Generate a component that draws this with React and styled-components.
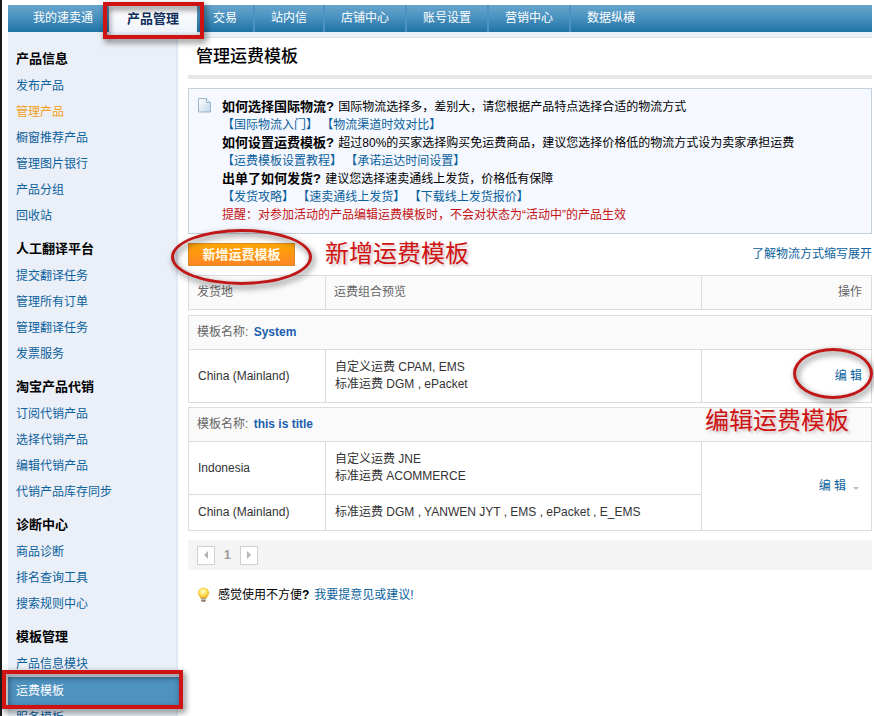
import React, { useState } from 'react';
import styled, { createGlobalStyle, css } from 'styled-components';

const GlobalStyle = createGlobalStyle`
  * {
    box-sizing: border-box;
  }
  body {
    margin: 0;
    background: white;
    color: #000;
    font-family: "Liberation Sans", "Noto Sans CJK SC", sans-serif;
    font-size: 12px;
    line-height: 18px;
  }
  a {
    color: #0b619c;
    text-decoration: none;
  }
`;

const Page = styled.div`
  height: 100vh;
  overflow: hidden;
  padding: 5px 2px 0 6px;
  border-left: 2px solid #1a1a1a;
`;

const Nav = styled.nav`
  display: flex;
  height: 27px;
  padding-left: 9px;
  background: linear-gradient(#68a5cc, #4a92c0 45%, #1f73a5);
`;

const NavItem = styled.div`
  position: relative;
  padding: 0 16px;
  line-height: 27px;
  border-right: ${(props) => (props.$line ? '2px solid #4b94c1' : 'none')};

  a {
    color: white;
  }

  ${(props) =>
    props.$active &&
    css`
      padding: 0 18px;
      background: linear-gradient(#ffffff, #f0f4fb);
      font-size: 13px;
      font-weight: bold;

      a {
        color: #12305c;
      }
    `}
`;

const Body = styled.div`
  display: flex;
`;

const Sidebar = styled.aside`
  flex: none;
  width: 170px;
  min-height: 100vh;
  padding-top: 14px;
  background: #ebf0f8;
  border-right: 2px solid #e1e8f6;
`;

const MenuTitle = styled.h2`
  margin: 0;
  padding-left: 8px;
  font-size: 13px;
  line-height: 26px;
`;

const MenuList = styled.ul`
  margin: 0 0 7px;
  padding: 1px 0 0;
  list-style: none;
`;

const MenuItem = styled.li`
  position: relative;
  padding-left: 8px;
  line-height: ${(props) => (props.$active ? '28px' : '26px')};
  background: ${(props) => (props.$active ? '#4e92c0' : 'none')};
  margin-right: ${(props) => (props.$active ? '-4px' : '0')};

  a {
    color: ${(props) => props.$color};
  }
`;

const Main = styled.main`
  flex: 1;
  min-width: 0;
  border-top: 5px solid #e9f1f9;
`;

const Content = styled.div`
  padding-left: 10px;
  border-top: 1px solid #d9e4ea;
`;

const Title = styled.h1`
  margin: 0 0 9px;
  padding-left: 8px;
  font-size: 17px;
  font-weight: 500;
  line-height: 37px;
  border-bottom: 4px solid #e6e6e6;
`;

const Notice = styled.section`
  display: flex;
  gap: 11px;
  padding: 9px;
  border: 1px solid #c3d1dd;
  background: #f5f8fe;
`;

const NoticeText = styled.div`
  p {
    margin: 0;
  }
  b {
    margin-right: 1px;
    font-size: 13px;
  }
`;

const Warning = styled.p`
  color: #c41414;
`;

const Toolbar = styled.div`
  display: flex;
  align-items: center;
  justify-content: space-between;
  height: 41px;
  padding-bottom: 1px;
`;

const Marked = styled.div`
  position: relative;
`;

const AddButton = styled.button`
  display: block;
  width: 107px;
  height: 23px;
  padding: 0;
  border: 1px solid #e08a24;
  background: linear-gradient(#ffa603, #ff8526);
  color: #fffbe8;
  font: bold 13px/21px "Liberation Sans", "Noto Sans CJK SC", sans-serif;
  cursor: pointer;
`;

const Table = styled.table`
  width: 100%;
  margin-bottom: ${(props) => props.$gap};
  border-collapse: separate;
  border-spacing: 0;
  table-layout: fixed;
  border-top: 1px solid #dcdcdc;
  border-left: 1px solid #dcdcdc;
  color: #333;

  th,
  td {
    padding: 8px 9px;
    border-right: 1px solid #dcdcdc;
    border-bottom: 1px solid #dcdcdc;
    text-align: left;
    line-height: 17px;
  }
  th {
    padding: 8px;
    background: #fafafa;
    color: #666;
    font-weight: normal;
  }
  tr > .action {
    padding-right: 9px;
    text-align: right;
  }
`;

const TemplateName = styled.a`
  margin-left: 2px;
  color: #1c5fae;
  font-weight: bold;
`;

const Row = styled.tr`
  height: ${(props) => props.$height};
`;

const Caret = styled.span`
  display: inline-block;
  margin: 0 3px 0 7px;
  border: 3px solid transparent;
  border-top-color: #bbb;
  border-bottom: none;
`;

const Pager = styled.div`
  display: flex;
  align-items: center;
  gap: 9px;
  height: 30px;
  padding-left: 9px;
  background: #f4f4f4;
  color: #999;
  font-weight: bold;
`;

const PageButton = styled.button`
  display: flex;
  align-items: center;
  justify-content: center;
  width: 18px;
  height: 19px;
  padding: 0;
  border: 1px solid #d0d0d0;
  background: white;
`;

const Feedback = styled.p`
  display: flex;
  align-items: center;
  margin: 16px 0;
  padding-left: 9px;

  span {
    margin: 0 5px 0 8px;
  }
`;

const markStyle = css`
  position: absolute;
  z-index: 2;
  pointer-events: none;
  filter: drop-shadow(2px 3px 3px rgba(0, 0, 0, 0.6));
`;

const Frame = styled.div`
  ${markStyle}
  inset: ${(props) => props.$inset};
  border: 4px solid #cf1212;
`;

const Oval = styled.div`
  ${markStyle}
  inset: ${(props) => props.$inset};
  border: 3px solid #c01818;
  border-radius: 50%;
`;

const MarkLabel = styled.span`
  position: absolute;
  z-index: 2;
  left: ${(props) => props.$left};
  top: ${(props) => props.$top};
  color: #cf1212;
  font-size: 24px;
  font-weight: normal;
  line-height: 28px;
  white-space: nowrap;
  text-shadow: 2px 2px 3px rgba(120, 60, 60, 0.35);
`;

const menus = [
  {
    title: '产品信息',
    items: ['发布产品', '管理产品', '橱窗推荐产品', '管理图片银行', '产品分组', '回收站'],
  },
  {
    title: '人工翻译平台',
    items: ['提交翻译任务', '管理所有订单', '管理翻译任务', '发票服务'],
  },
  {
    title: '淘宝产品代销',
    items: ['订阅代销产品', '选择代销产品', '编辑代销产品', '代销产品库存同步'],
  },
  { title: '诊断中心', items: ['商品诊断', '排名查询工具', '搜索规则中心'] },
  { title: '模板管理', items: ['产品信息模块', '运费模板', '服务模板'] },
];

const tabs = ['交易', '站内信', '店铺中心', '账号设置', '营销中心'];

const SideCol = styled.col`
  width: ${(props) => props.$width};
`;

const Columns = () => (
  <colgroup>
    <SideCol $width="137px" />
    <col />
    <SideCol $width="170px" />
  </colgroup>
);

const DocIcon = () => (
  <svg width="13" height="15" viewBox="0 0 13 15">
    <defs>
      <linearGradient id="paper" x1="0" y1="0" x2="1" y2="1">
        <stop offset="0" stopColor="#fff" />
        <stop offset="1" stopColor="#c3d6e8" />
      </linearGradient>
    </defs>
    <path d="M.5.5h8l4 4v9.500H.5z" fill="url(#paper)" stroke="#9fb3c8" />
    <path d="M8.500.5v4h4" fill="#e9f1f8" stroke="#9fb3c8" />
  </svg>
);

const BulbIcon = () => (
  <svg width="13" height="16" viewBox="0 0 13 16">
    <defs>
      <radialGradient id="bulb" cx=".45" cy=".35" r=".65">
        <stop offset="0" stopColor="#fffde0" />
        <stop offset=".5" stopColor="#ffe45c" />
        <stop offset="1" stopColor="#efa91c" />
      </radialGradient>
    </defs>
    <path
      d="M6.500 1C3.300 1 1.200 3.200 1.200 5.900c0 2.300 1.800 3.500 2.500 5.300h5.600c.7-1.800 2.500-3 2.500-5.300C11.800 3.200 9.700 1 6.500 1z"
      fill="url(#bulb)"
      stroke="#f0bd3c"
      strokeWidth=".6"
    />
    <path d="M4 11.200h5v2.400L7.700 15H5.300L4 13.600z" fill="#9a8878" />
    <path d="M4 12.500h5" stroke="#d9cfc5" strokeWidth=".8" />
  </svg>
);

const Arrow = ({ d }) => (
  <svg width="6" height="8" viewBox="0 0 6 8">
    <path d={d} fill="#b5b5b5" />
  </svg>
);

const App = () => {
  const [current, setCurrent] = useState('运费模板');

  const itemColor = (item) => {
    if (item === current) return 'white';
    return item === '管理产品' ? '#f0a01c' : '#0b619c';
  };

  return (
    <>
      <GlobalStyle />
      <Page>
        <Nav>
          <NavItem>
            <a href="#home">我的速卖通</a>
          </NavItem>
          <NavItem $active>
            <a href="#product">产品管理</a>
            <Frame $inset="-3px -7px -7px -6px" />
          </NavItem>
          {tabs.map((tab) => (
            <NavItem key={tab} $line>
              <a href="#tab">{tab}</a>
            </NavItem>
          ))}
          <NavItem>
            <a href="#data">数据纵横</a>
          </NavItem>
        </Nav>

        <Body>
          <Sidebar>
            {menus.map((menu) => (
              <div key={menu.title}>
                <MenuTitle>{menu.title}</MenuTitle>
                <MenuList>
                  {menu.items.map((item) => (
                    <MenuItem
                      key={item}
                      $active={item === current}
                      $color={itemColor(item)}
                    >
                      <a href="#menu" onClick={() => setCurrent(item)}>
                        {item}
                      </a>
                      {item === '运费模板' && (
                        <Frame $inset="-7px -3px -4px -6px" />
                      )}
                    </MenuItem>
                  ))}
                </MenuList>
              </div>
            ))}
          </Sidebar>

          <Main>
            <Content>
              <Title>管理运费模板</Title>

              <Notice>
                <DocIcon />
                <NoticeText>
                  <p>
                    <b>如何选择国际物流?</b>{' '}
                    国际物流选择多，差别大，请您根据产品特点选择合适的物流方式
                  </p>
                  <p>
                    <a href="#intro">【国际物流入门】</a>{' '}
                    <a href="#compare">【物流渠道时效对比】</a>
                  </p>
                  <p>
                    <b>如何设置运费模板?</b>{' '}
                    超过80%的买家选择购买免运费商品，建议您选择价格低的物流方式设为卖家承担运费
                  </p>
                  <p>
                    <a href="#guide">【运费模板设置教程】</a>{' '}
                    <a href="#promise">【承诺运达时间设置】</a>
                  </p>
                  <p>
                    <b>出单了如何发货?</b>{' '}
                    建议您选择速卖通线上发货，价格低有保障
                  </p>
                  <p>
                    <a href="#tips">【发货攻略】</a>{' '}
                    <a href="#online">【速卖通线上发货】</a>{' '}
                    <a href="#price">【下载线上发货报价】</a>
                  </p>
                  <Warning>
                    提醒：对参加活动的产品编辑运费模板时，不会对状态为“活动中”的产品生效
                  </Warning>
                </NoticeText>
              </Notice>

              <Toolbar>
                <Marked>
                  <AddButton type="button">新增运费模板</AddButton>
                  <Oval $inset="-14px -17px -19px -17px" />
                  <MarkLabel $left="137px" $top="-3px">
                    新增运费模板
                  </MarkLabel>
                </Marked>
                <a href="#abbr">了解物流方式缩写展开</a>
              </Toolbar>

              <Table $gap="5px">
                <Columns />
                <thead>
                  <tr>
                    <th>发货地</th>
                    <th>运费组合预览</th>
                    <th className="action">操作</th>
                  </tr>
                </thead>
              </Table>

              <Table $gap="4px">
                <Columns />
                <thead>
                  <tr>
                    <th colSpan="3">
                      模板名称: <TemplateName href="#system">System</TemplateName>
                    </th>
                  </tr>
                </thead>
                <tbody>
                  <Row $height="53px">
                    <td>China (Mainland)</td>
                    <td>
                      自定义运费 CPAM, EMS
                      <br />
                      标准运费 DGM , ePacket
                    </td>
                    <td className="action">
                      <Marked>
                        <a href="#edit">编 辑</a>
                        <Oval $inset="-20px -11px -14px 82px" />
                      </Marked>
                    </td>
                  </Row>
                </tbody>
              </Table>

              <Table $gap="9px">
                <Columns />
                <thead>
                  <tr>
                    <th colSpan="3">
                      <Marked>
                        模板名称: <TemplateName href="#title">this is title</TemplateName>
                        <MarkLabel $left="calc(100% - 158px)" $top="-9px">
                          编辑运费模板
                        </MarkLabel>
                      </Marked>
                    </th>
                  </tr>
                </thead>
                <tbody>
                  <Row $height="53px">
                    <td>Indonesia</td>
                    <td>
                      自定义运费 JNE
                      <br />
                      标准运费 ACOMMERCE
                    </td>
                    <td className="action" rowSpan="2">
                      <a href="#edit">编 辑</a>
                      <Caret />
                    </td>
                  </Row>
                  <Row $height="36px">
                    <td>China (Mainland)</td>
                    <td>标准运费 DGM , YANWEN JYT , EMS , ePacket , E_EMS</td>
                  </Row>
                </tbody>
              </Table>

              <Pager>
                <PageButton type="button" aria-label="上一页">
                  <Arrow d="M5 0v8L1 4z" />
                </PageButton>
                <span>1</span>
                <PageButton type="button" aria-label="下一页">
                  <Arrow d="M1 0v8l4-4z" />
                </PageButton>
              </Pager>

              <Feedback>
                <BulbIcon />
                <span>
                  感觉使用不方便<b>?</b>
                </span>
                <a href="#feedback">我要提意见或建议!</a>
              </Feedback>
            </Content>
          </Main>
        </Body>
      </Page>
    </>
  );
};

export default App;
